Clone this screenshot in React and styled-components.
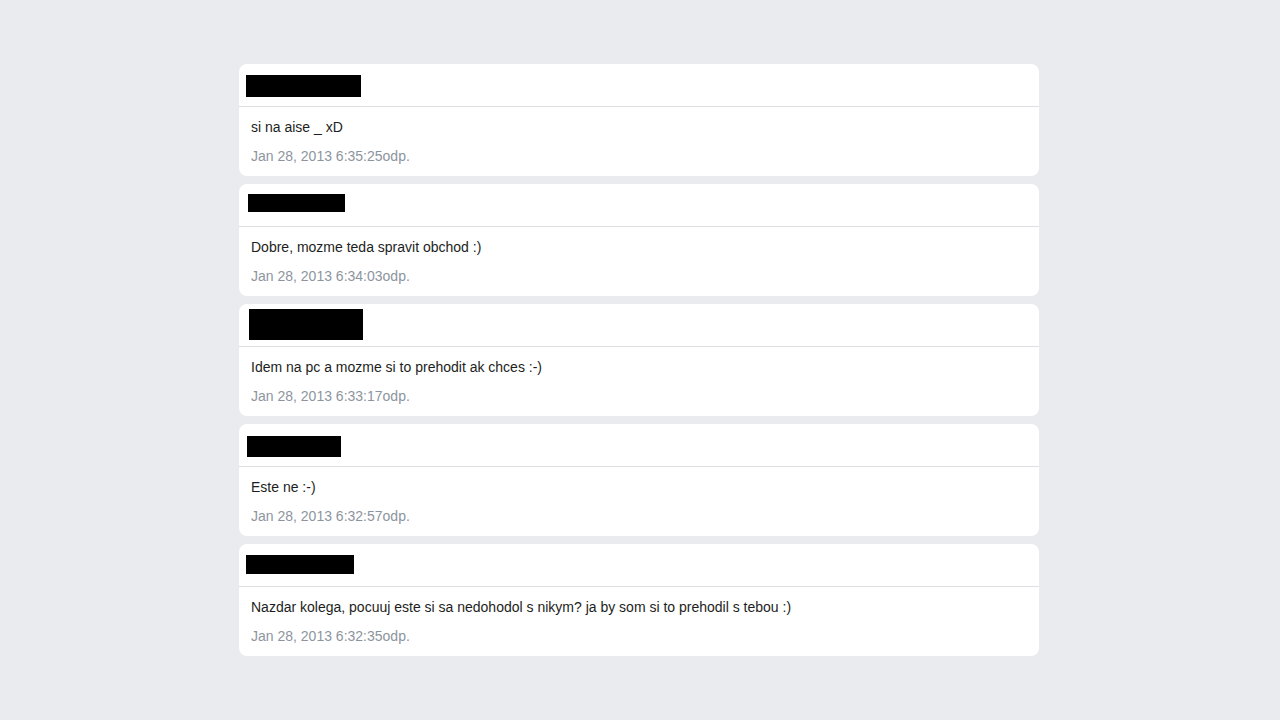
import React from "react";
import styled, { createGlobalStyle } from "styled-components";

const Global = createGlobalStyle`
  html, body { margin: 0; padding: 0; background: #e9ebee; }
  body { font-family: "Liberation Sans", Arial, sans-serif; }
`;

const Page = styled.div`
  display: flex;
  justify-content: center;
  padding: 64px 2px 64px 0;
`;

const List = styled.div`
  width: 800px;
  display: flex;
  flex-direction: column;
  gap: 8px;
`;

const Card = styled.div`
  background: #fff;
  border-radius: 8px;
  overflow: hidden;
`;

const Header = styled.div`
  height: 42px;
  display: flex;
  align-items: flex-start;
  border-bottom: 1px solid #dddfe2;
`;

const Redact = styled.div`
  background: #000;
  width: ${(p) => p.$w}px;
  height: ${(p) => p.$h}px;
  margin-left: ${(p) => p.$x}px;
  margin-top: ${(p) => p.$y}px;
`;

const Body = styled.div`
  padding: 10px 12px 10px;
  display: flex;
  flex-direction: column;
  gap: 9px;
`;

const Text = styled.div`
  font-size: 14px;
  line-height: 20px;
  color: #1c1e21;
`;

const Time = styled.div`
  font-size: 14px;
  line-height: 20px;
  color: #8d949e;
`;

const messages = [
  { r: [7, 11, 115, 22], text: "si na aise _ xD", time: "Jan 28, 2013 6:35:25odp." },
  { r: [9, 10, 97, 18], text: "Dobre, mozme teda spravit obchod :)", time: "Jan 28, 2013 6:34:03odp." },
  { r: [10, 5, 114, 31], text: "Idem na pc a mozme si to prehodit ak chces :-)", time: "Jan 28, 2013 6:33:17odp." },
  { r: [8, 12, 94, 21], text: "Este ne :-)", time: "Jan 28, 2013 6:32:57odp." },
  { r: [7, 11, 108, 19], text: "Nazdar kolega, pocuuj este si sa nedohodol s nikym? ja by som si to prehodil s tebou :)", time: "Jan 28, 2013 6:32:35odp." },
];

export default function App() {
  return (
    <>
      <Global />
      <Page>
        <List>
          {messages.map((m, i) => (
            <Card key={i}>
              <Header>
                <Redact $x={m.r[0]} $y={m.r[1]} $w={m.r[2]} $h={m.r[3]} />
              </Header>
              <Body>
                <Text>{m.text}</Text>
                <Time>{m.time}</Time>
              </Body>
            </Card>
          ))}
        </List>
      </Page>
    </>
  );
}
